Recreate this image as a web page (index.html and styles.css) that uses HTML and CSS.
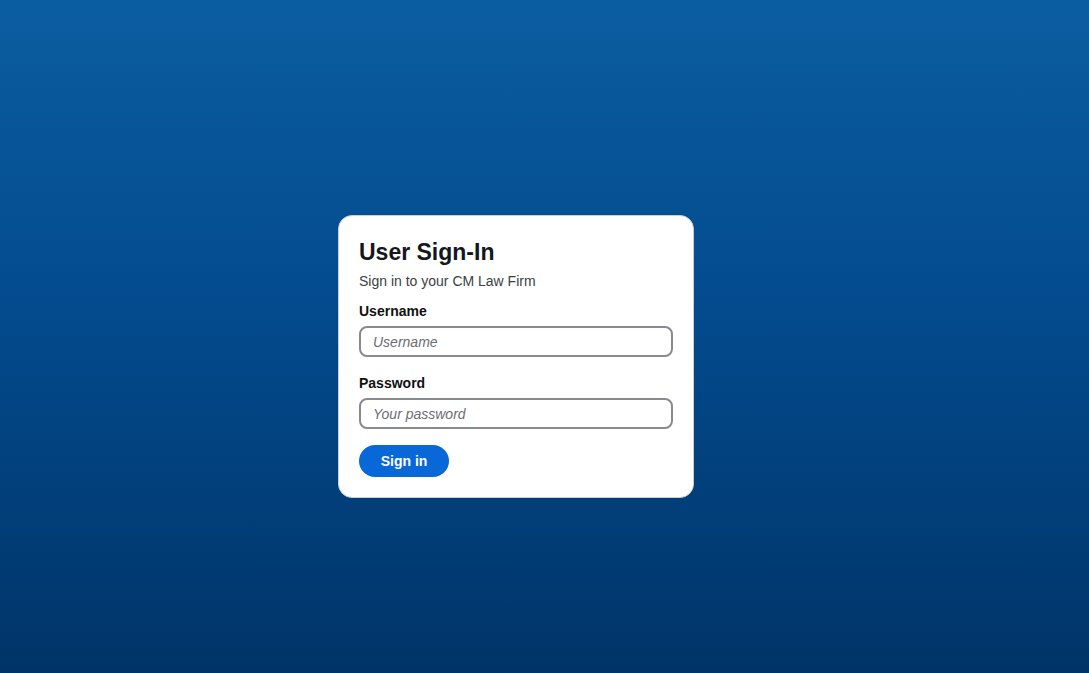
FILE: index.html
```html
<!DOCTYPE html>
<html lang="en">
<head>
<meta charset="utf-8">
<title>User Sign-In</title>
<link rel="stylesheet" href="styles.css">
</head>
<body>
<main class="page">
  <form class="card">
    <h1 class="title">User Sign-In</h1>
    <p class="subtitle">Sign in to your CM Law Firm</p>
    <label class="label" for="u">Username</label>
    <input class="field" id="u" type="text" placeholder="Username">
    <label class="label label-gap" for="p">Password</label>
    <input class="field" id="p" type="password" placeholder="Your password">
    <button class="btn" type="button">Sign in</button>
  </form>
</main>
</body>
</html>
```
FILE: styles.css
```css
* { box-sizing: border-box; }
html, body { margin: 0; height: 100%; }
body {
  font-family: "Liberation Sans", Arial, sans-serif;
  background: linear-gradient(180deg, #0b5da1 0%, #034b8e 45%, #003468 100%);
}
.page {
  height: 100%;
  display: flex;
  align-items: center;
  justify-content: center;
  padding: 40px 57px 0 0;
}
.card {
  width: 356px;
  background: #fff;
  border: 1px solid #c9ccd3;
  border-radius: 14px;
  padding: 21px 20px 20px;
  display: flex;
  flex-direction: column;
  align-items: flex-start;
}
.title {
  margin: 0;
  font-size: 23px;
  font-weight: 700;
  color: #14171c;
  line-height: 30px;
  letter-spacing: 0;
}
.subtitle {
  margin: 5px 0 0;
  font-size: 14px;
  color: #3b3e44;
  line-height: 18px;
}
.label {
  margin-top: 12px;
  font-size: 14px;
  font-weight: 700;
  color: #111;
  line-height: 18px;
}
.label-gap { margin-top: 17px; }
.field {
  margin-top: 6px;
  width: 100%;
  height: 31px;
  border: 2px solid #898a90;
  border-radius: 8px;
  padding: 0 12px;
  font-family: inherit;
  font-size: 14px;
  background: #fff;
}
.field::placeholder {
  font-style: italic;
  color: #6b6d74;
}
.btn {
  margin-top: 16px;
  width: 90px;
  height: 32px;
  border: none;
  border-radius: 16px;
  background: #0868d8;
  color: #fff;
  font-family: inherit;
  font-size: 14px;
  font-weight: 700;
}
```
